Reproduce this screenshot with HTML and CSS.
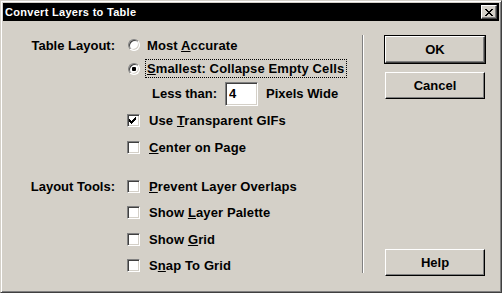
FILE: index.html
```html
<!DOCTYPE html>
<html lang="en">
<head>
  <meta charset="UTF-8">
  <title>Convert Layers to Table</title>
  <link rel="stylesheet" href="styles.css">
</head>
<body>
  <div class="window">
    <div class="titlebar">
      <span class="title">Convert Layers to Table</span>
      <button class="close-btn" aria-label="Close">
        <svg width="8" height="7" viewBox="0 0 8 7" shape-rendering="crispEdges">
          <path d="M0 0h2v1h-2zM6 0h2v1h-2zM1 1h2v1h-2zM5 1h2v1h-2zM2 2h4v1h-4zM3 3h2v1h-2zM2 4h4v1h-4zM1 5h2v1h-2zM5 5h2v1h-2zM0 6h2v1h-2zM6 6h2v1h-2z" fill="#000"/>
        </svg>
      </button>
    </div>
    <div class="content">
      <div class="options">
        <div class="row r1">
          <div class="label">Table Layout:</div>
          <span class="radio"></span>
          <span class="text">Most <u>A</u>ccurate</span>
        </div>
        <div class="row r2">
          <div class="label"></div>
          <span class="radio checked"></span>
          <span class="text focus"><u>S</u>mallest: Collapse Empty Cells</span>
        </div>
        <div class="row r3">
          <div class="label"></div>
          <span class="less">Less than:</span>
          <input class="num" type="text" value="4">
          <span class="unit">Pixels Wide</span>
        </div>
        <div class="row r4">
          <div class="label"></div>
          <span class="check checked">
            <svg width="13" height="13" viewBox="0 0 13 13" shape-rendering="crispEdges">
              <path d="M9 3h1v3h-1zM8 4h1v3h-1zM7 5h1v3h-1zM6 6h1v3h-1zM5 7h1v3h-1zM4 6h1v3h-1zM3 5h1v3h-1z" fill="#000" transform="translate(-1 0)"/>
            </svg>
          </span>
          <span class="text">Use <u>T</u>ransparent GIFs</span>
        </div>
        <div class="row r5">
          <div class="label"></div>
          <span class="check"></span>
          <span class="text"><u>C</u>enter on Page</span>
        </div>
        <div class="row r6">
          <div class="label">Layout Tools:</div>
          <span class="check"></span>
          <span class="text"><u>P</u>revent Layer Overlaps</span>
        </div>
        <div class="row r7">
          <div class="label"></div>
          <span class="check"></span>
          <span class="text">Show <u>L</u>ayer Palette</span>
        </div>
        <div class="row r8">
          <div class="label"></div>
          <span class="check"></span>
          <span class="text">Show <u>G</u>rid</span>
        </div>
        <div class="row r9">
          <div class="label"></div>
          <span class="check"></span>
          <span class="text">S<u>n</u>ap To Grid</span>
        </div>
      </div>
      <div class="separator"></div>
      <div class="buttons">
        <button class="btn default">OK</button>
        <button class="btn">Cancel</button>
        <button class="btn help">Help</button>
      </div>
    </div>
  </div>
</body>
</html>
```

FILE: styles.css
```css
* {
  box-sizing: border-box;
}
body {
  margin: 0;
  background-color: #d4d0c8;
  font-family: 'Liberation Sans', Arial, sans-serif;
  font-size: 13px;
  font-weight: bold;
  color: #000;
}
.window {
  width: 502px;
  height: 293px;
  background-color: #d4d0c8;
  border: 1px solid;
  border-color: #d4d0c8 #404040 #404040 #d4d0c8;
  box-shadow: inset 1px 1px #fff, inset -1px -1px #808080;
  padding: 2px;
}
.titlebar {
  height: 18px;
  background-color: #000;
  color: #fff;
  display: flex;
  align-items: center;
  justify-content: space-between;
  padding: 0 2px;
}
.title {
  font-size: 11px;
  letter-spacing: 0.3px;
  font-weight: bold;
}
.close-btn {
  width: 16px;
  height: 14px;
  padding: 0;
  background-color: #d4d0c8;
  border: 1px solid;
  border-color: #fff #404040 #404040 #fff;
  box-shadow: inset -1px -1px #808080;
  display: flex;
  align-items: center;
  justify-content: center;
}
.content {
  display: flex;
  height: 268px;
}
.options {
  width: 359px;
  margin-top: 12px;
  display: flex;
  flex-direction: column;
}
.row {
  display: flex;
  align-items: center;
  height: 26px;
}
.r1 { height: 24px; }
.r2 { height: 23px; }
.r3 { height: 27px; }
.r4 { height: 27px; }
.r5 { height: 27px; margin-bottom: 12px; }
.r6 { height: 26px; }
.r7 { height: 27px; }
.label {
  width: 112px;
  margin-right: 12px;
  text-align: right;
}
.radio {
  width: 12px;
  height: 12px;
  margin-left: 1px;
  margin-right: 5px;
  border-radius: 50%;
  background-color: #fff;
  border: 1px solid;
  border-color: #808080 #fff #fff #808080;
  box-shadow: inset 1px 1px #404040, inset -1px -1px #d4d0c8;
  display: flex;
  align-items: center;
  justify-content: center;
}
.radio.checked::after {
  content: "";
  width: 4px;
  height: 4px;
  background-color: #000;
  border-radius: 1px;
}
.text {
  border: 1px dotted transparent;
  padding: 1px 2px 1px 1px;
  line-height: 15px;
  letter-spacing: 0.12px;
}
.text.focus {
  border-color: #000;
}
.check {
  width: 13px;
  height: 13px;
  margin-right: 7px;
  background-color: #fff;
  border: 1px solid;
  border-color: #808080 #fff #fff #808080;
  box-shadow: inset 1px 1px #404040, inset -1px -1px #d4d0c8;
  display: flex;
}
.check svg {
  margin: -1px;
}
.less {
  margin-left: 25px;
  width: 73px;
}
.num {
  width: 33px;
  height: 24px;
  margin: 0;
  padding: 0 3px;
  font: inherit;
  background-color: #fff;
  border: 1px solid;
  border-color: #808080 #fff #fff #808080;
  box-shadow: inset 1px 1px #404040, inset -1px -1px #d4d0c8;
  outline: none;
}
.unit {
  margin-left: 8px;
}
.separator {
  width: 2px;
  height: 238px;
  margin-top: 14px;
  border-left: 1px solid #808080;
  border-right: 1px solid #fff;
}
.buttons {
  margin-top: 15px;
  margin-left: 21px;
  width: 100px;
  height: 240px;
  display: flex;
  flex-direction: column;
  gap: 9px;
}
.btn {
  width: 100px;
  height: 27px;
  padding: 0;
  font: inherit;
  color: #000;
  background-color: #d4d0c8;
  border: 1px solid;
  border-color: #fff #000 #000 #fff;
  box-shadow: inset -1px -1px #808080;
}
.btn.default {
  outline: 1px solid #000;
  border-color: #fff #404040 #404040 #fff;
}
.btn.help {
  margin-top: auto;
}
```
